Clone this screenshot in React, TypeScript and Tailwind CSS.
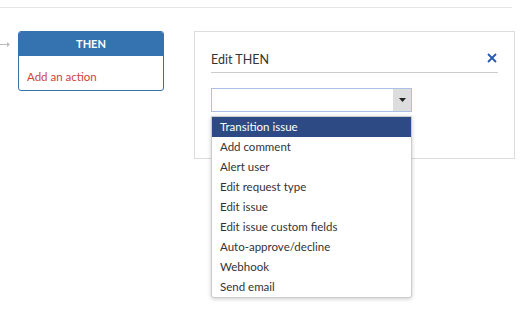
const actions = [
  "Transition issue",
  "Add comment",
  "Alert user",
  "Edit request type",
  "Edit issue",
  "Edit issue custom fields",
  "Auto-approve/decline",
  "Webhook",
  "Send email",
];

export default function App() {
  return (
    <div className="relative w-[523px] h-[314px] bg-white overflow-hidden text-[#333] font-['Lato',sans-serif]">
      <div className="h-[8px] w-[512px] border-b border-[#e4e4e4]" />

      <div className="flex pt-[23px]">
        {/* connector arrow */}
        <div className="w-[18px] pt-[11px]">
          <svg width="12" height="5" viewBox="0 0 12 5">
            <line x1="0" y1="2.5" x2="8" y2="2.5" stroke="#bbb" strokeWidth="1" />
            <path d="M7 0 L10 2.5 L7 5 Z" fill="#bbb" />
          </svg>
        </div>

        <div className="w-[146px] h-[60px] rounded-[3px] border border-[#3572b0] overflow-hidden">
          <div className="h-[24px] bg-[#3572b0] text-white text-[11px] font-bold flex items-center justify-center">
            THEN
          </div>
          <div className="px-[8px] pt-[12px] text-[11.5px] text-[#d04437]">Add an action</div>
        </div>

        <div className="ml-[30px] w-[321px] h-[128px] border border-[#dcdcdc] px-[16px] pt-[17px]">
          <div className="flex items-center justify-between border-b border-[#ccc] h-[24px] pb-[1px]">
            <span className="text-[12.5px] text-[#333]">Edit THEN</span>
            <svg width="10" height="10" viewBox="0 0 10 10" className="mr-[1px] mb-[5px]">
              <path d="M1 1 L9 9 M9 1 L1 9" stroke="#2458b3" strokeWidth="1.8" />
            </svg>
          </div>

          <div className="mt-[15px] w-[201px] h-[24px] border border-[#a9c1e6] flex justify-end">
            <div className="w-[18px] h-full bg-[#ddd] flex items-center justify-center">
              <svg width="7" height="4" viewBox="0 0 7 4">
                <path d="M0 0 L7 0 L3.5 4 Z" fill="#222" />
              </svg>
            </div>
          </div>

          <div className="relative z-10 mt-[4px] w-[201px] bg-white border border-[#ccc] rounded-b-[3px] shadow-[0_1px_4px_rgba(0,0,0,0.2)]">
            {actions.map((a, i) => (
              <div
                key={a}
                className={
                  i === 0
                    ? "h-[20px] px-[8px] flex items-center text-[11.5px] bg-[#2d4a85] text-white"
                    : "h-[20px] px-[8px] flex items-center text-[11.5px] text-[#333]"
                }
              >
                {a}
              </div>
            ))}
          </div>
        </div>
      </div>
    </div>
  );
}
